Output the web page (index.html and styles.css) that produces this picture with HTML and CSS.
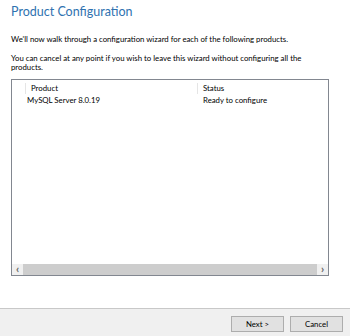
FILE: index.html
```html
<!DOCTYPE html>
<html lang="en">
<head>
  <meta charset="UTF-8">
  <title>Product Configuration</title>
  <link rel="stylesheet" href="styles.css">
</head>
<body>
  <div class="page">
    <div class="content">
      <h1>Product Configuration</h1>
      <p class="intro">We'll now walk through a configuration wizard for each of the following products.</p>
      <p class="intro">You can cancel at any point if you wish to leave this wizard without configuring all the products.</p>

      <div class="list">
        <div class="list-head">
          <span class="col-product">Product</span>
          <span class="col-status">Status</span>
        </div>
        <div class="list-row">
          <span class="cell-product">MySQL Server 8.0.19</span>
          <span class="cell-status">Ready to configure</span>
        </div>
        <div class="list-body"></div>
        <div class="hscroll">
          <span class="arrow">&lsaquo;</span>
          <span class="track"></span>
          <span class="arrow">&rsaquo;</span>
        </div>
      </div>
    </div>

    <div class="footer">
      <button class="btn">Next &gt;</button>
      <button class="btn">Cancel</button>
    </div>
  </div>
</body>
</html>
```

FILE: styles.css
```css
* {
  box-sizing: border-box;
}
body {
  margin: 0;
  font-family: Lato, 'Open Sans', sans-serif;
  font-size: 7.8px;
  color: #000;
  background: #fff;
}
.page {
  display: flex;
  flex-direction: column;
  height: 336px;
}
.content {
  flex: 1;
  padding: 0 21px 0 11px;
}
h1 {
  margin: 2px 0 0 0;
  font-size: 12.5px;
  font-weight: 400;
  line-height: 20px;
  color: #2f72b0;
}
.intro {
  margin: 13px 0 0 0;
  line-height: 9.5px;
}
.intro + .intro {
  margin-top: 9px;
}
.list {
  margin-top: 6px;
  height: 197px;
  border: 1px solid #828790;
  display: flex;
  flex-direction: column;
}
.list-head,
.list-row {
  display: flex;
  height: 11px;
  line-height: 11px;
}
.list-head {
  margin-top: 3px;
}
.col-product {
  width: 173px;
  margin-left: 13px;
  padding-left: 5px;
  border-left: 1px solid #e5e5e5;
  border-right: 1px solid #e5e5e5;
}
.col-status {
  padding-left: 5px;
}
.list-row {
  margin-top: 1px;
}
.cell-product {
  width: 190px;
  padding-left: 15px;
}
.cell-status {
  padding-left: 1px;
}
.list-body {
  flex: 1;
}
.hscroll {
  display: flex;
  height: 11px;
  background: #cdcdcd;
}
.arrow {
  width: 11px;
  background: #f0f0f0;
  color: #606060;
  font-size: 11px;
  font-weight: 700;
  line-height: 10px;
  text-align: center;
}
.track {
  flex: 1;
}
.footer {
  height: 28px;
  background: #f0f0f0;
  border-top: 1px solid #c8c8c8;
  display: flex;
  justify-content: flex-end;
  align-items: center;
  gap: 6px;
  padding: 2px 7px 0 0;
}
.btn {
  width: 53px;
  height: 16px;
  padding: 0;
  background: #e1e1e1;
  border: 1px solid #adadad;
  font-family: inherit;
  font-size: 7.8px;
  color: #000;
}
```
